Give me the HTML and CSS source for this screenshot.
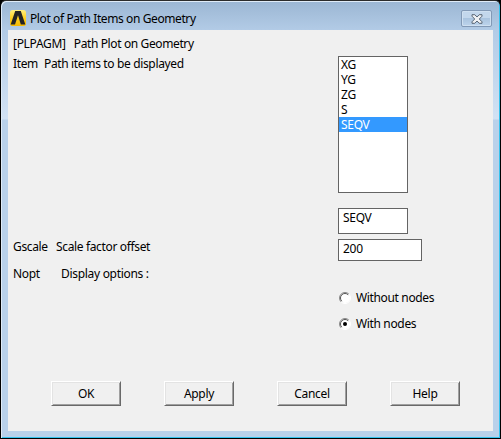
FILE: index.html
```
<!DOCTYPE html>
<html lang="en">
<head>
<meta charset="utf-8">
<title>Plot of Path Items on Geometry</title>
<link rel="stylesheet" href="styles.css">
</head>
<body>
<div class="window">
  <header class="titlebar">
    <svg class="logo" width="16" height="16" viewBox="0 0 16 16">
      <defs><linearGradient id="gold" x1="0" y1="0" x2="0" y2="1"><stop offset="0" stop-color="#fff080"/><stop offset=".45" stop-color="#ffd42a"/><stop offset="1" stop-color="#f5b800"/></linearGradient></defs>
      <rect width="16" height="16" rx="2.5" fill="url(#gold)"/>
      <path d="M5.2 1h5.6L15.3 14.5h-4.5L8 5.2 5 14.5H.7z" fill="#242424"/>
    </svg>
    <h1 class="title">Plot of Path Items on Geometry</h1>
    <button class="close" aria-label="Close">
      <svg width="12" height="10" viewBox="0 0 12 10"><path d="M1 .7h2.8L6 3 8.2.7H11v1.5L8.3 5 11 7.8v1.5H8.2L6 7 3.8 9.3H1V7.8L3.7 5 1 2.2z" fill="#eef0f3" stroke="#596676" stroke-width="1"/></svg>
    </button>
  </header>
  <main class="content">
    <p class="command"><span>[PLPAGM]</span><span class="t-command">Path Plot on Geometry</span></p>
    <div class="row items">
      <p class="label"><span class="t-item">Item</span><span class="t-desc">Path items to be displayed</span></p>
      <div class="fields">
        <ul class="list"><li>XG</li><li>YG</li><li>ZG</li><li>S</li><li class="selected">SEQV</li></ul>
        <div class="box picked">SEQV</div>
      </div>
    </div>
    <div class="row scale">
      <p class="label"><span class="t-gscale">Gscale</span><span class="t-scale">Scale factor offset</span></p>
      <div class="box number">200</div>
    </div>
    <p class="label nopt"><span class="t-nopt">Nopt</span><span class="t-options">Display options :</span></p>
    <div class="radios">
      <div class="radio"><svg width="12" height="12" viewBox="0 0 12 12"><circle cx="6" cy="6" r="5" fill="#fff"/><path d="M2.1 9.9A5.5 5.5 0 0 1 9.9 2.1" fill="none" stroke="#8a8a8a"/><path d="M2.8 9.2A4.5 4.5 0 0 1 9.2 2.8" fill="none" stroke="#555"/><path d="M9.9 2.1A5.5 5.5 0 0 1 2.1 9.9" fill="none" stroke="#fff"/></svg><span class="t-without">Without nodes</span></div>
      <div class="radio"><svg width="12" height="12" viewBox="0 0 12 12"><circle cx="6" cy="6" r="5" fill="#fff"/><path d="M2.1 9.9A5.5 5.5 0 0 1 9.9 2.1" fill="none" stroke="#8a8a8a"/><path d="M2.8 9.2A4.5 4.5 0 0 1 9.2 2.8" fill="none" stroke="#555"/><path d="M9.9 2.1A5.5 5.5 0 0 1 2.1 9.9" fill="none" stroke="#fff"/><circle cx="6" cy="6" r="2" fill="#000"/></svg><span class="t-with">With nodes</span></div>
    </div>
    <div class="buttons"><button>OK</button><button>Apply</button><button>Cancel</button><button>Help</button></div>
  </main>
</div>
</body>
</html>
```
FILE: styles.css
```
* { box-sizing: border-box; }
body { margin: 0; background: #000; font: 12px/15px "Noto Sans", sans-serif; color: #000; letter-spacing: -0.3px; }
p, h1, ul { margin: 0; padding: 0; }
.window {
  width: 501px; height: 439px; padding: 0 6px 6px;
  border: 1px solid #000; border-top-color: #2b2b2b; border-radius: 6px 6px 0 0;
  box-shadow: inset 1px 1px #dfebf7, inset -1px -1px #35c3ee;
  background: linear-gradient(#9bb6d3 0, #b2cbe6 29px, #d2e2f4 118px, #b9d1ea 119px);
}
.titlebar { height: 29px; display: flex; align-items: flex-start; padding: 9px 2px 0 3px; }
.logo { margin: 0 4px 0 0; }
.title { flex: 1; font-size: 12px; font-weight: 400; line-height: 16px; letter-spacing: -0.4px; white-space: nowrap; padding-top: 1px; }
.close { width: 31px; height: 17px; padding: 0; display: grid; place-items: center; border: 1px solid #8299b6; border-radius: 2px; background: linear-gradient(#c3d7ec 0 45%, #aac4df 50%, #bdd4ec); box-shadow: inset 0 0 0 1px #cfe0f1; }
.content { width: 485px; height: 401px; margin-left: 1px; padding: 6px 5px 0; background: #f0f0f0; white-space: nowrap; }
.command { height: 20px; display: flex; gap: 8px; }
.t-command { letter-spacing: -0.38px; }
.row { display: grid; grid-template-columns: 325px auto; justify-content: start; }
.items { height: 183px; }
.label { display: flex; }
.items .label { gap: 6px; letter-spacing: -0.35px; }
.list { width: 70px; height: 137px; border: 1px solid #646464; background: #fff; list-style: none; padding: 0; }
.list li { height: 15px; padding-left: 2px; }
.list .selected { background: #3399ff; color: #fff; }
.box { border: 1px solid #646464; background: #fff; padding: 2px 4px; }
.picked { width: 70px; height: 26px; margin-top: 15px; padding-top: 1px; }
.number { width: 84px; height: 22px; padding-top: 1px; }
.scale { height: 27px; }
.scale .label { letter-spacing: -0.35px; }
.t-gscale { width: 43px; }
.nopt { height: 24px; }
.t-nopt { width: 48px; }
.radios { padding-left: 326px; display: grid; gap: 11px; letter-spacing: -0.35px; }
.radio { display: flex; align-items: center; gap: 5px; height: 15px; }
.buttons { display: flex; gap: 43px; padding: 50px 0 0 38px; }
.buttons button { width: 70px; height: 25px; padding: 0 0 1px; border: solid; border-width: 1px 1px 1px 1px; border-color: #fff #696969 #696969 #fff; background: #f0f0f0; box-shadow: inset 1px 1px #e3e3e3, inset -1px -1px #a0a0a0; font: inherit; letter-spacing: inherit; color: #000; }
```
